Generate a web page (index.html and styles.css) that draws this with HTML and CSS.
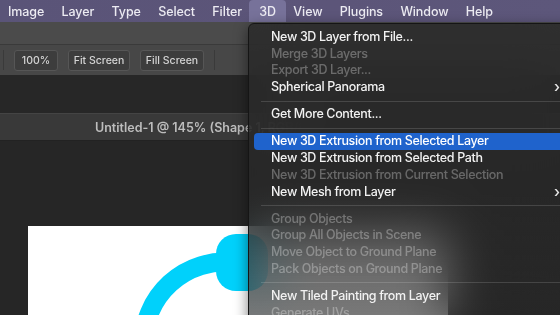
FILE: index.html
```html
<!DOCTYPE html>
<html lang="en">
<head>
  <meta charset="UTF-8">
  <meta name="viewport" content="width=device-width, initial-scale=1.0">
  <title>3D Menu</title>
  <link rel="stylesheet" href="styles.css">
</head>
<body>
  <div class="app">
    <div class="menubar">
      <span class="menu-title">Image</span>
      <span class="menu-title">Layer</span>
      <span class="menu-title">Type</span>
      <span class="menu-title">Select</span>
      <span class="menu-title">Filter</span>
      <span class="menu-title active">3D</span>
      <span class="menu-title">View</span>
      <span class="menu-title">Plugins</span>
      <span class="menu-title">Window</span>
      <span class="menu-title">Help</span>
    </div>

    <div class="strip"></div>

    <div class="toolbar">
      <span class="divider"></span>
      <button class="tool-btn btn-zoom">100%</button>
      <button class="tool-btn btn-fit">Fit Screen</button>
      <button class="tool-btn btn-fill">Fill Screen</button>
      <span class="divider"></span>
    </div>

    <div class="gap"></div>

    <div class="tabbar">
      <span class="tab-title">Untitled-1 @ 145% (Shape 1, RGB/8)</span>
    </div>

    <div class="workspace">
      <div class="canvas">
        <svg width="420" height="120" viewBox="0 0 420 120">
          <path d="M 115.5 118 A 81.5 81.5 0 0 1 205 36.5" fill="none" stroke="#00d1fb" stroke-width="19"/>
          <rect x="188" y="8" width="52" height="57" rx="20" fill="#00d1fb"/>
        </svg>
      </div>
    </div>
  </div>

  <div class="dropdown">
    <div class="item">New 3D Layer from File...</div>
    <div class="item disabled">Merge 3D Layers</div>
    <div class="item disabled">Export 3D Layer...</div>
    <div class="item submenu">Spherical Panorama</div>
    <div class="sep"></div>
    <div class="item">Get More Content...</div>
    <div class="sep"></div>
    <div class="item selected">New 3D Extrusion from Selected Layer</div>
    <div class="item">New 3D Extrusion from Selected Path</div>
    <div class="item disabled">New 3D Extrusion from Current Selection</div>
    <div class="item submenu">New Mesh from Layer</div>
    <div class="sep"></div>
    <div class="item disabled">Group Objects</div>
    <div class="item disabled">Group All Objects in Scene</div>
    <div class="item disabled">Move Object to Ground Plane</div>
    <div class="item disabled">Pack Objects on Ground Plane</div>
    <div class="sep"></div>
    <div class="item">New Tiled Painting from Layer</div>
    <div class="item disabled">Generate UVs...</div>
  </div>
</body>
</html>
```

FILE: styles.css
```css
body {
  margin: 0;
  width: 560px;
  height: 315px;
  overflow: hidden;
  background: #262626;
  font-family: Inter, "Liberation Sans", Arial, sans-serif;
  position: relative;
}
.app {
  display: flex;
  flex-direction: column;
  height: 315px;
  overflow: hidden;
}
.menubar {
  height: 22px;
  flex-shrink: 0;
  display: flex;
  align-items: stretch;
  padding-left: 0;
  background: linear-gradient(90deg, #5a5478, #5c5579 60%, #5d577b);
}
.menu-title {
  display: flex;
  align-items: center;
  padding: 0 8.7px;
  color: #ecebf2;
  font-size: 12.5px;
  font-weight: 500;
  letter-spacing: -0.1px;
}
.menu-title:first-child {
  padding-left: 8px;
}
.menu-title.active {
  background: #77729a;
  border-radius: 4px 4px 0 0;
  padding: 0 10px;
  margin: 0 -1.3px;
}
.strip {
  height: 22px;
  flex-shrink: 0;
  background: #4b4b4b;
  border-bottom: 1px solid #3a3a3a;
}
.toolbar {
  height: 30px;
  flex-shrink: 0;
  display: flex;
  align-items: center;
  gap: 10px;
  padding-left: 3px;
  background: #474747;
}
.divider {
  width: 1px;
  height: 20px;
  background: #3a3a3a;
}
.tool-btn {
  height: 21px;
  padding: 0;
  border: 1px solid #565656;
  border-radius: 3px;
  background: #3d3d3d;
  color: #d4d4d4;
  font-family: Inter, "Liberation Sans", Arial, sans-serif;
  font-size: 10.5px;
  font-weight: 500;
}
.btn-zoom {
  width: 44px;
}
.btn-fit {
  width: 62px;
}
.btn-fill {
  width: 64px;
}
.gap {
  height: 38px;
  flex-shrink: 0;
  background: #272727;
}
.tabbar {
  height: 26px;
  flex-shrink: 0;
  display: flex;
  align-items: center;
  padding-left: 95px;
  background: #393939;
  border-top: 1px solid #444;
  border-bottom: 1px solid #222;
}
.tab-title {
  color: #bdbdbd;
  font-size: 12.5px;
  font-weight: 600;
  white-space: nowrap;
}
.workspace {
  flex: 1;
  min-height: 0;
  padding: 85px 0 0 28px;
  background: #262626;
}
.canvas {
  width: 420px;
  height: 120px;
  background: #ffffff;
}
.canvas svg {
  display: block;
}
.dropdown {
  position: absolute;
  left: 248px;
  top: 23px;
  width: 330px;
  height: 310px;
  padding-top: 5px;
  box-sizing: border-box;
  background: linear-gradient(180deg, rgba(40, 40, 40, 0.8) 55%, rgba(40, 40, 40, 0.6));
  backdrop-filter: blur(24px) saturate(0.8);
  border: 1px solid #151515;
  border-radius: 6px;
  box-shadow: 0 4px 14px rgba(0, 0, 0, 0.5);
}
.item {
  height: 16.7px;
  line-height: 16.7px;
  margin: 0 0 0 5px;
  padding-left: 17px;
  color: #f2f2f2;
  font-size: 12.5px;
  font-weight: 500;
  letter-spacing: -0.35px;
  white-space: nowrap;
  position: relative;
}
.item.disabled {
  color: rgba(255, 255, 255, 0.3);
}
.item.selected {
  background: #1f63cc;
  border-radius: 4px;
  color: #ffffff;
}
.item.submenu::after {
  content: "›";
  position: absolute;
  left: 300px;
  top: 0;
  font-size: 15px;
  color: #e8e8e8;
}
.sep {
  height: 1px;
  margin: 5px 0 4.5px 12px;
  background: rgba(255, 255, 255, 0.14);
}
```
